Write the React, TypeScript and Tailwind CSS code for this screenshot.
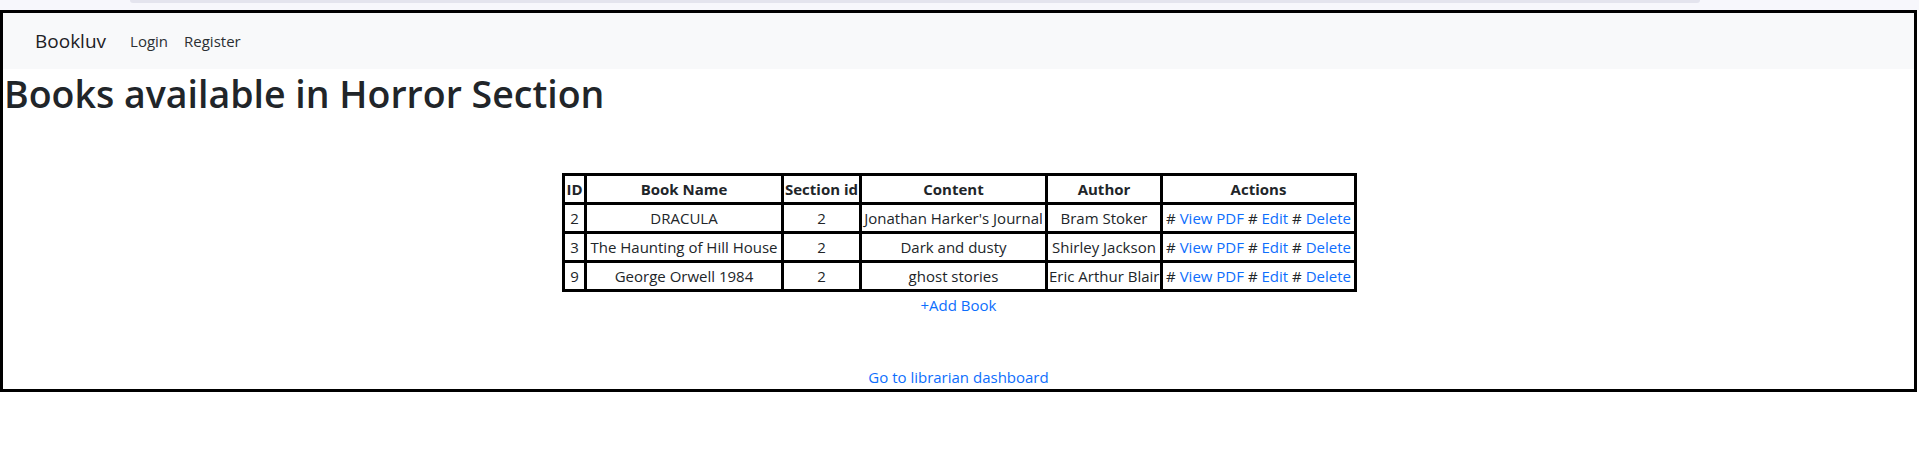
import React from "react";

type Book = {
    id: number;
    name: string;
    section: number;
    content: string;
    author: string;
};

const books: Book[] = [
    { id: 2, name: "DRACULA", section: 2, content: "Jonathan Harker's Journal", author: "Bram Stoker" },
    { id: 3, name: "The Haunting of Hill House", section: 2, content: "Dark and dusty", author: "Shirley Jackson" },
    { id: 9, name: "George Orwell 1984", section: 2, content: "ghost stories", author: "Eric Arthur Blair" },
];

const cell = "border-[3px] border-black p-px text-center whitespace-nowrap leading-6 overflow-visible";

export default function App() {
    return (
        <div className="min-h-screen bg-white font-['Open_Sans','Noto_Sans',sans-serif] text-[#212529]">
            {/* browser strip */}
            <div className="h-[10px] bg-[#f7f7fc] pl-[130px] pr-[219px]">
                <div className="h-[3px] rounded-b-full bg-[#e4e4ee]" />
            </div>

            <div className="mr-[2px] border-[3px] border-black">
                {/* Navbar */}
                <nav className="h-[56px] bg-[#f8f9fa] flex items-center pl-[32px]">
                    <a className="text-[19px] leading-[30px] text-[#1d2125] mr-[16px]">Bookluv</a>
                    <a className="text-[15px] leading-6 px-2 text-[#2b2f33]">Login</a>
                    <a className="text-[15px] leading-6 px-2 text-[#2b2f33]">Register</a>
                </nav>

                <h1 className="text-[37.5px] leading-[48px] font-semibold mb-[8px] pl-px pt-px">
                    Books available in Horror Section
                </h1>
                <div className="h-[47px]" />

                {/* Table */}
                <table className="mx-auto table-fixed border-collapse w-[795px] text-[15px] translate-x-px">
                    <colgroup>
                        <col className="w-[22px]" />
                        <col className="w-[197px]" />
                        <col className="w-[78px]" />
                        <col className="w-[186px]" />
                        <col className="w-[115px]" />
                        <col className="w-[194px]" />
                    </colgroup>
                    <thead>
                        <tr>
                            <th className={cell}>ID</th>
                            <th className={cell}>Book Name</th>
                            <th className={cell}>Section id</th>
                            <th className={cell}>Content</th>
                            <th className={cell}>Author</th>
                            <th className={cell}>Actions</th>
                        </tr>
                    </thead>
                    <tbody>
                        {books.map((b) => (
                            <tr key={b.id}>
                                <td className={cell}>{b.id}</td>
                                <td className={cell}>{b.name}</td>
                                <td className={cell}>{b.section}</td>
                                <td className={cell}>{b.content}</td>
                                <td className={cell}>{b.author}</td>
                                <td className={cell}>
                                    # <a className="text-[#0d6efd]">View PDF</a> #{" "}
                                    <a className="text-[#0d6efd]">Edit</a> #{" "}
                                    <a className="text-[#0d6efd]">Delete</a>
                                </td>
                            </tr>
                        ))}
                    </tbody>
                </table>

                <div className="text-center text-[15px] leading-6 pt-px">
                    <a className="text-[#0d6efd]">+Add Book</a>
                </div>
                <div className="h-[48px]" />
                <div className="text-center text-[15px] leading-6">
                    <a className="text-[#0d6efd]">Go to librarian dashboard</a>
                </div>
            </div>
        </div>
    );
}
